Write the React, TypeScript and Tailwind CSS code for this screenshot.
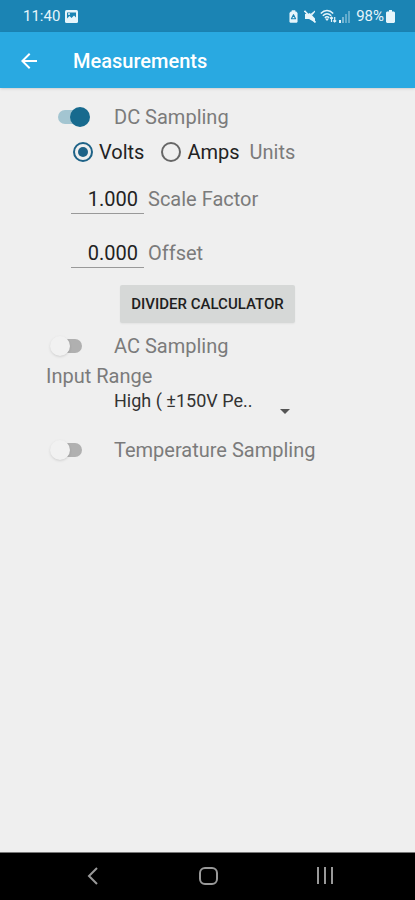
import React, { useState } from "react";
import clsx from "clsx";

const RANGES = ["High ( ±150V Pe..", "Medium ( ±15V Pe..", "Low ( ±1.5V Pe.."];

function App() {
  const [dc, setDc] = useState(true);
  const [ac, setAc] = useState(false);
  const [temperature, setTemperature] = useState(false);

  return (
    <div className="flex min-h-screen w-full flex-col bg-[#efefef] font-[Roboto,'Noto_Sans',sans-serif] text-[#7b7b7b]">
      <StatusBar />

      <header className="flex h-14 items-center bg-[#29a9e1] px-[17px] pt-[2px] text-white shadow-sm">
        <button aria-label="Back" className="flex size-6 items-center justify-center">
          <svg viewBox="0 0 24 24" className="size-6" fill="currentColor">
            <path d="M20 11H7.8l5.6-5.6L12 4l-8 8 8 8 1.4-1.4L7.8 13H20z" />
          </svg>
        </button>
        <h1 className="ml-8 text-xl font-medium">Measurements</h1>
      </header>

      <main className="flex-1 pt-[11px] text-xl">
        <SwitchRow label="DC Sampling" checked={dc} onChange={setDc} />

        <div className="flex h-[34px] items-center pl-[73px]">
          <div className="flex gap-[17px]">
            <UnitRadio label="Volts" defaultChecked />
            <UnitRadio label="Amps" />
          </div>
          <span className="ml-[10px]">Units</span>
        </div>

        <div className="pt-[3px]">
          <NumberRow label="Scale Factor" value="1.000" />
          <NumberRow label="Offset" value="0.000" />
        </div>

        <div className="flex justify-center py-[5px]">
          <button className="h-[38px] rounded-xs bg-[#d6d8d7] px-[11px] text-[15px] font-medium text-[#202020] shadow-xs">
            DIVIDER CALCULATOR
          </button>
        </div>

        <SwitchRow label="AC Sampling" checked={ac} onChange={setAc} />

        <div className="flex flex-col pl-[46px]">
          <label htmlFor="range" className="leading-6">
            Input Range
          </label>
          <div className="relative ml-[68px] w-44">
            <select
              id="range"
              className="block h-[26px] w-full appearance-none bg-transparent text-lg leading-6 text-[#333333] outline-none"
            >
              {RANGES.map((range) => (
                <option key={range}>{range}</option>
              ))}
            </select>
            <svg
              viewBox="0 0 10 5"
              className="pointer-events-none absolute right-0 bottom-0 h-[5px] w-[10px]"
              fill="#555555"
            >
              <path d="M0 0h10L5 5z" />
            </svg>
          </div>
        </div>

        <div className="pt-[18px]">
          <SwitchRow
            label="Temperature Sampling"
            checked={temperature}
            onChange={setTemperature}
          />
        </div>
      </main>

      <NavigationBar />
    </div>
  );
}

export default App;

function StatusBar() {
  return (
    <div className="flex h-8 items-center justify-between bg-[#1b84b4] pr-5 pl-[23px] text-[15px] text-[#e6f5fb]">
      <div className="flex items-center gap-[5px]">
        <span>11:40</span>
        <svg viewBox="0 0 13 13" className="size-[13px]">
          <rect width="13" height="13" rx="1.500" fill="currentColor" />
          <path d="M2 2.500h9v5L9 5.500 6.500 8 4.500 6 2 8.500z" fill="#1b84b4" />
          <circle cx="4" cy="4" r="1" fill="currentColor" />
        </svg>
      </div>

      <div className="flex items-center">
        <svg viewBox="0 0 10 14" className="mr-[6px] h-[13px] w-[9px]">
          <path d="M3 0h4v1.500h1L9.500 3v10l-1 1h-7l-1-1V3L2 1.500h1z" fill="currentColor" />
          <path
            d="M5 5 7.300 9.500H2.700z"
            fill="none"
            stroke="#1b84b4"
            strokeWidth="1.300"
            strokeLinejoin="round"
          />
        </svg>
        <svg viewBox="0 0 12 13" className="mr-[4px] h-[13px] w-3" fill="currentColor">
          <path d="M1 4h3l7-4v12.500L5 9H1z" />
          <path d="M3 0 12 9.500V0z" fill="#1b84b4" />
          <path d="M6.500 4 11 .5V2L8 5.500z" />
          <path d="M.5 .8 11.500 12.500" stroke="currentColor" strokeWidth="1.600" />
        </svg>
        <svg
          viewBox="0 0 17 14"
          className="mr-[2px] h-[14px] w-[17px]"
          fill="none"
          stroke="currentColor"
          strokeWidth="1.500"
        >
          <path d="M.8 4.500C4.500 .6 9.500.6 13.200 4.500" />
          <path d="M2.800 6.700c2.700-2.600 5.700-2.600 8.400 0" />
          <path d="M4.800 8.800c1.400-1.300 3-1.300 4.400 0" />
          <path d="M5 9.500h4L7 12z" fill="currentColor" stroke="none" />
          <path
            d="M11.500 13V8M10 9.500 11.500 8 13 9.500M14.700 8v5M13.200 11.500l1.500 1.500 1.500-1.500"
            strokeWidth="1.200"
          />
        </svg>
        <svg viewBox="0 0 12 13" className="mr-[5px] h-[13px] w-3" fill="currentColor">
          <rect x="0" y="10" width="2" height="3" />
          <rect x="3" y="7" width="2" height="6" opacity=".45" />
          <rect x="6" y="4" width="2" height="9" opacity=".35" />
          <rect x="9" y="1" width="2" height="12" opacity=".35" />
        </svg>
        <span>98%</span>
        <svg viewBox="0 0 9 13" className="ml-[2px] h-[13px] w-[9px]" fill="currentColor">
          <path d="M3 0h3v1.500h2l1 1V12l-1 1H1l-1-1V2.500l1-1h2z" />
        </svg>
      </div>
    </div>
  );
}

function SwitchRow({
  label,
  checked,
  onChange,
}: {
  label: string;
  checked: boolean;
  onChange: (checked: boolean) => void;
}) {
  return (
    <label className="flex h-9 items-center pl-[50px]">
      <span className={clsx("flex w-16 items-center", checked && "pl-1")}>
        <input
          type="checkbox"
          role="switch"
          className="sr-only"
          checked={checked}
          onChange={(e) => onChange(e.target.checked)}
        />
        <span
          className={clsx(
            "mx-1 flex h-[14px] w-7 items-center rounded-full",
            checked ? "justify-end bg-[#a3c5d1]" : "justify-start bg-[#b0b0b0]",
          )}
        >
          <span
            className={clsx(
              "size-5 shrink-0 rounded-full",
              checked ? "-mr-1 bg-[#176a8e]" : "-ml-1 bg-[#f1f1f1] shadow-sm",
            )}
          />
        </span>
      </span>
      <span>{label}</span>
    </label>
  );
}

function UnitRadio({
  label,
  defaultChecked,
}: {
  label: string;
  defaultChecked?: boolean;
}) {
  return (
    <label className="flex items-center gap-[6px] text-[#222222]">
      <input
        type="radio"
        name="units"
        defaultChecked={defaultChecked}
        className="flex size-5 appearance-none items-center justify-center rounded-full border-2 border-[#666666] before:size-[10px] before:rounded-full checked:border-[#1d6287] checked:before:bg-[#1d6287]"
      />
      {label}
    </label>
  );
}

function NumberRow({ label, value }: { label: string; value: string }) {
  return (
    <label className="flex h-[54px] items-center gap-1 pl-[71px]">
      <input
        type="text"
        inputMode="decimal"
        defaultValue={value}
        className="h-[30px] w-[73px] border-b border-[#999999] bg-transparent pr-[6px] text-right text-[#222222] outline-none"
      />
      {label}
    </label>
  );
}

function NavigationBar() {
  return (
    <nav className="flex h-12 items-center justify-around border-t border-[#777777] bg-black pr-[33px] pl-[35px] text-[#999999]">
      <button aria-label="Back">
        <svg viewBox="0 0 20 20" className="size-5" fill="none" stroke="currentColor" strokeWidth="2">
          <path d="M14 1 6 9l8 8" />
        </svg>
      </button>
      <button aria-label="Home">
        <svg viewBox="0 0 20 20" className="size-5" fill="none" stroke="currentColor" strokeWidth="2">
          <rect x="2" y="1" width="17" height="16" rx="5" />
        </svg>
      </button>
      <button aria-label="Recent apps">
        <svg viewBox="0 0 20 20" className="size-5" fill="none" stroke="currentColor" strokeWidth="2">
          <path d="M4 0v17M11 0v17M18 0v17" />
        </svg>
      </button>
    </nav>
  );
}
